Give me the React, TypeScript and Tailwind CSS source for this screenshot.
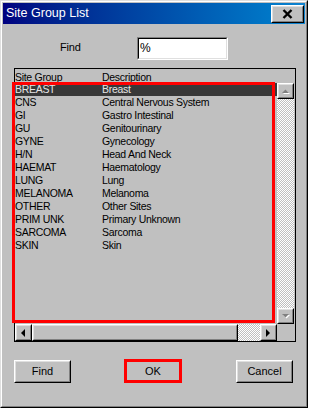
import React from "react";

const rows: [string, string][] = [
  ["BREAST", "Breast"],
  ["CNS", "Central Nervous System"],
  ["GI", "Gastro Intestinal"],
  ["GU", "Genitourinary"],
  ["GYNE", "Gynecology"],
  ["H/N", "Head And Neck"],
  ["HAEMAT", "Haematology"],
  ["LUNG", "Lung"],
  ["MELANOMA", "Melanoma"],
  ["OTHER", "Other Sites"],
  ["PRIM UNK", "Primary Unknown"],
  ["SARCOMA", "Sarcoma"],
  ["SKIN", "Skin"],
];

function Raised({ className = "", children }: { className?: string; children?: React.ReactNode }) {
  return (
    <div className={"border border-t-[#ffffff] border-l-[#ffffff] border-r-black border-b-black bg-[#c0c0c0] " + className}>
      <div className="w-full h-full border border-t-[#dfdfdf] border-l-[#dfdfdf] border-r-[#808080] border-b-[#808080] flex items-center justify-center">
        {children}
      </div>
    </div>
  );
}

function Arrow({ dir, disabled }: { dir: "up" | "down" | "left" | "right"; disabled?: boolean }) {
  const fill = disabled ? "#808080" : "#000000";
  if (dir === "up" || dir === "down") {
    const pts = dir === "up" ? "0,4 7,4 3.5,0.5" : "0,0 7,0 3.5,3.5";
    return (
      <svg width="8" height="5" viewBox="0 0 8 5">
        {disabled && <polygon points={dir === "up" ? "1,5 8,5 4.5,1.5" : "1,1 8,1 4.5,4.5"} fill="#ffffff" />}
        <polygon points={pts} fill={fill} />
      </svg>
    );
  }
  const pts = dir === "left" ? "4,0 4,8 0,4" : "0,0 0,8 4,4";
  return (
    <svg width="5" height="8" viewBox="0 0 5 8">
      <polygon points={pts} fill={fill} />
    </svg>
  );
}

const checker =
  "bg-[repeating-conic-gradient(#c0c0c0_0%_25%,#ffffff_0%_50%)] bg-[length:2px_2px]";

export default function App() {
  return (
    <div className="w-[308px] h-[408px] border border-t-[#dfdfdf] border-l-[#dfdfdf] border-r-black border-b-black bg-[#c0c0c0] font-['Liberation_Sans',Arial,sans-serif] text-black overflow-hidden">
      <div className="h-full border border-t-white border-l-white border-r-[#808080] border-b-[#808080] p-[1px] flex flex-col">
        {/* Title bar */}
        <div className="h-[21px] shrink-0 bg-linear-to-r from-[#000080] to-[#1084d0] flex items-center justify-between">
          <span className="pl-[3px] text-white text-[12.5px] leading-none">Site Group List</span>
          <Raised className="w-[33px] h-[18px] mr-[1px]">
            <svg width="11" height="10" viewBox="0 0 11 10">
              <path d="M1.5 1 L9.5 9 M9.5 1 L1.5 9" stroke="#000" strokeWidth="2.4" />
            </svg>
          </Raised>
        </div>

        {/* Body */}
        <div className="relative flex-1 flex flex-col">
          {/* Find row */}
          <div className="mt-[13px] flex h-[23px]">
            <span className="ml-[57px] w-[77px] pt-[3px] text-[11px] tracking-[-0.2px] leading-[14px]">Find</span>
            <div className="w-[91px] h-[23px] border border-t-[#808080] border-l-[#808080] border-r-white border-b-white">
              <div className="w-full h-full border border-t-black border-l-black border-r-[#dfdfdf] border-b-[#dfdfdf] bg-white pl-[1px] pt-[2px] text-[12px] leading-[14px]">
                %
              </div>
            </div>
          </div>

          {/* List */}
          <div className="mt-[8px] ml-[11px] w-[282px] h-[274px] border border-black flex flex-col text-[10.5px] tracking-[-0.3px]">
            <div className="h-[14px] shrink-0 flex leading-[14px] pt-[1px]">
              <span className="w-[87px]">Site Group</span>
              <span>Description</span>
            </div>
            <div className="h-[241px] shrink-0 flex">
              <div className="w-[262px] overflow-hidden">
                {rows.map(([code, desc], i) => (
                  <div
                    key={code}
                    className={
                      "h-[13px] flex leading-[13px] whitespace-nowrap " +
                      (i === 0 ? "bg-[#383838] text-[#e4e4e4]" : "")
                    }
                  >
                    <span className="w-[87px]">{code}</span>
                    <span>{desc}</span>
                  </div>
                ))}
              </div>
              <div className="w-[17px] flex flex-col">
                <Raised className="w-[17px] h-[16px] shrink-0">
                  <Arrow dir="up" disabled />
                </Raised>
                <div className={"flex-1 " + checker} />
                <Raised className="w-[17px] h-[16px] shrink-0">
                  <Arrow dir="down" disabled />
                </Raised>
              </div>
            </div>
            <div className="h-[17px] shrink-0 flex">
              <Raised className="w-[17px] h-[17px] shrink-0">
                <Arrow dir="left" />
              </Raised>
              <Raised className="w-[206px] h-[17px] shrink-0" />
              <div className={"w-[22px] h-[17px] " + checker} />
              <Raised className="w-[17px] h-[17px] shrink-0">
                <Arrow dir="right" />
              </Raised>
              <div className="w-[17px] h-[17px] bg-[#c0c0c0]" />
            </div>
          </div>

          {/* Buttons */}
          <div className="mt-[18px] flex text-[11px]">
            <Raised className="ml-[11px] w-[57px] h-[23px]">Find</Raised>
            <div className="ml-[53px] w-[58px] h-[24px] -mt-[1px] border-[3px] border-[#ff0000] flex items-center justify-center bg-[#c0c0c0]">
              OK
            </div>
            <Raised className="ml-[54px] w-[57px] h-[23px]">Cancel</Raised>
          </div>

          {/* Red annotation around list rows */}
          <div className="absolute left-[9px] top-[58px] w-[263px] h-[241px] border-[3px] border-[#ff0000] pointer-events-none" />
        </div>
      </div>
    </div>
  );
}
